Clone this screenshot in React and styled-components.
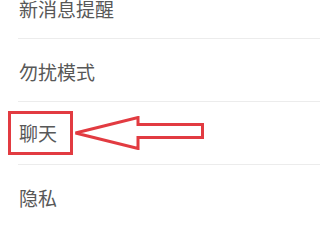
import React from 'react';
import styled, {createGlobalStyle} from 'styled-components';

//reset the page and set a CJK font
const GlobalStyle = createGlobalStyle`
    html, body {
        margin:0;
        padding:0;
        background-color:#fff;
    }
    body {
        font-family:"Noto Sans CJK SC", "Noto Sans", sans-serif;
        overflow:hidden;
    }
`;

//settings list, the first row is partly scrolled off the top
const List = styled.ul`
    list-style:none;
    margin:-24px 0 0 0;
    padding:0;
    width:320px;
`;

//one settings row with its inset divider
const Row = styled.li`
    position:relative;
    display:flex;
    align-items:center;
    height:62px;
    padding:3px 0 0 19px;
    box-sizing:border-box;
    &::after {
        content:"";
        position:absolute;
        left:18px;
        right:0;
        bottom:-1px;
        height:1px;
        background-color:#ececec;
    }
    & + & {
        margin-top:1px;
    }
`;

const Label = styled.span`
    font-size:19px;
    line-height:22px;
    color:#585858;
    letter-spacing:0;
    ${(props) => props.marked && `
        border:3px solid #e23b41;
        padding:8px 13px 8px 8px;
        margin-left:-11px;
        margin-top:-3px;
    `}
`;

const Arrow = styled.svg`
    display:block;
    flex:none;
    margin-top:-3px;
`;

//red outlined arrow pointing left at the marked item
function PointerArrow(){
    return (
        <Arrow width="131" height="34" viewBox="0 0 131 34">
            <polygon
                points="2.5,17 65,1.5 65,8.5 129.5,8.5 129.5,21.5 65,21.5 65,32.5"
                fill="#fff"
                stroke="#e23b41"
                strokeWidth="3"
                strokeLinejoin="miter"/>
        </Arrow>
    );
}

const items = [
    {label:'新消息提醒'},
    {label:'勿扰模式'},
    {label:'聊天', marked:true},
    {label:'隐私'},
];

export default function App(){
    return (
        <>
            <GlobalStyle/>
            <List>
                {items.map((item) => (
                    <Row key={item.label}>
                        <Label marked={item.marked}>{item.label}</Label>
                        {item.marked && <PointerArrow/>}
                    </Row>
                ))}
            </List>
        </>
    );
}
